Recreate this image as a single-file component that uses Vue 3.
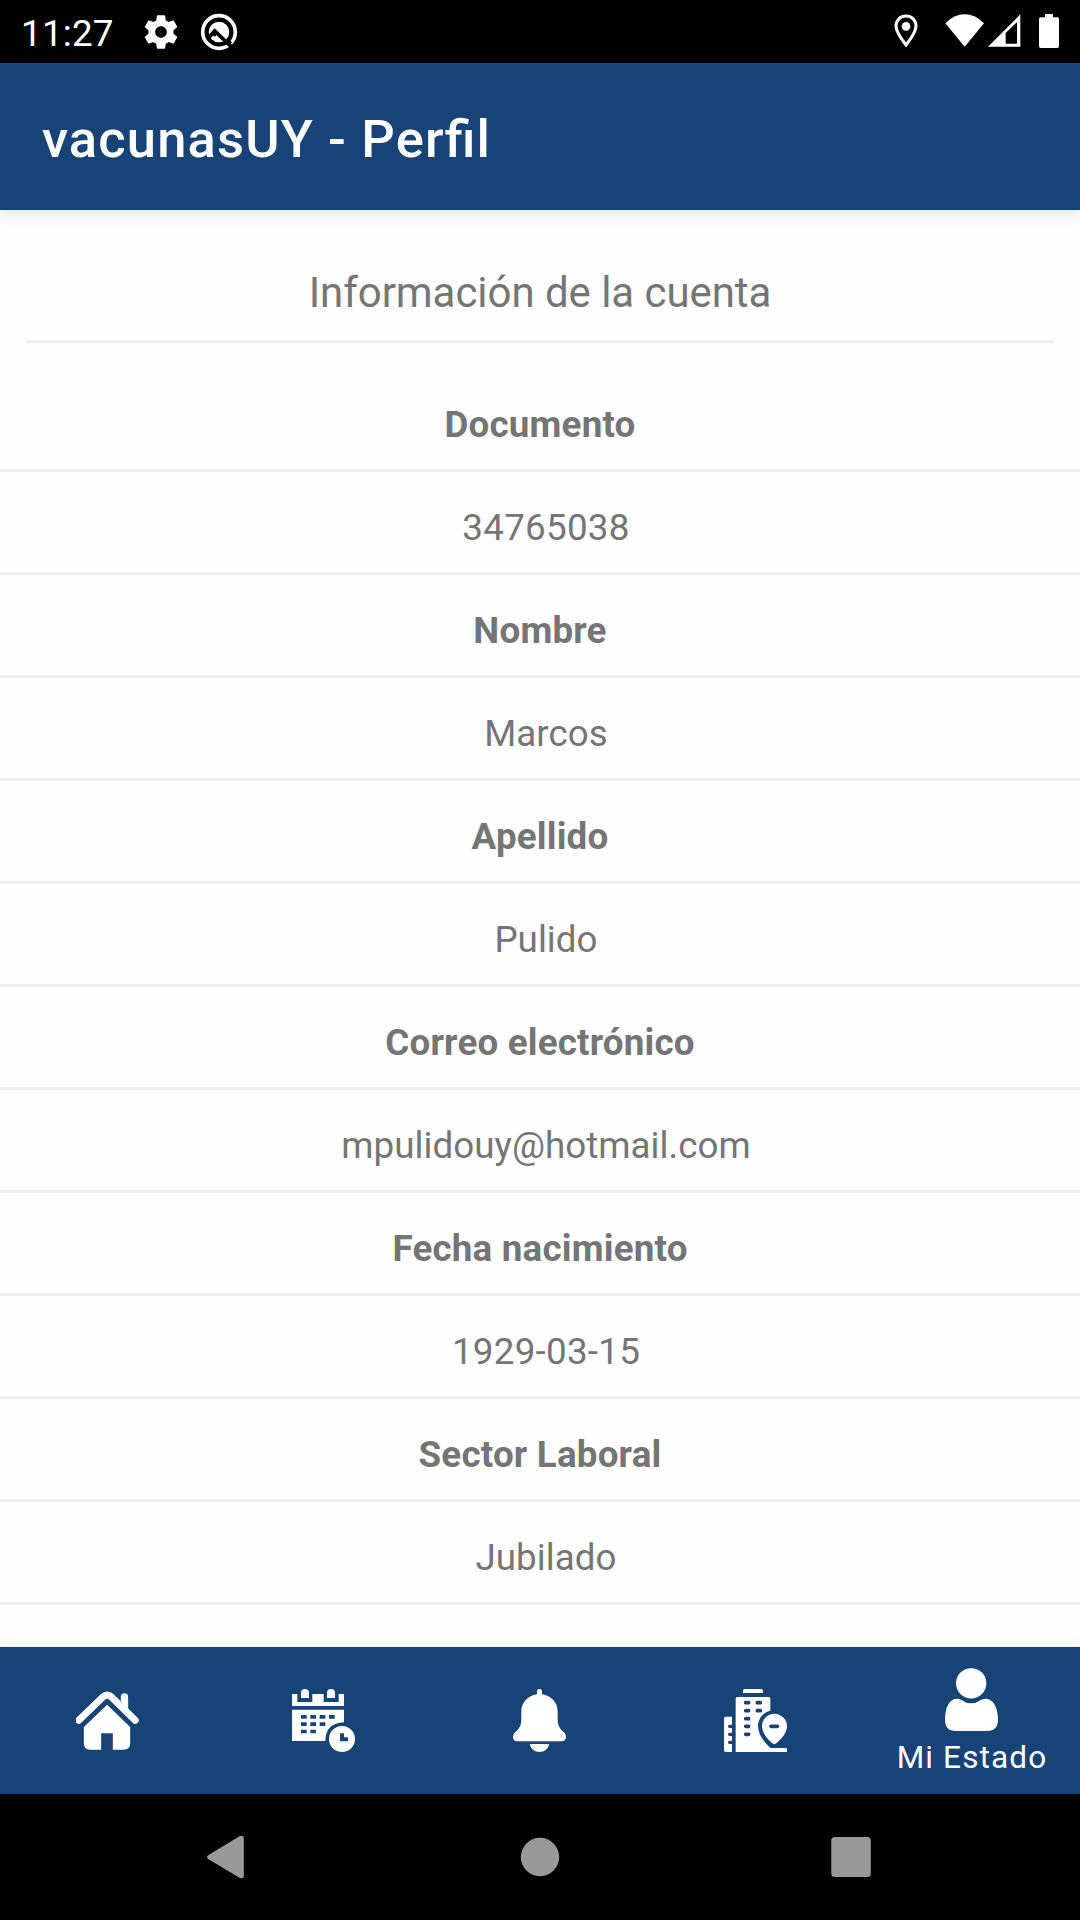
<script setup>
const fields = [
  { label: 'Documento', value: '34765038', numeric: true },
  { label: 'Nombre', value: 'Marcos' },
  { label: 'Apellido', value: 'Pulido' },
  { label: 'Correo electrónico', value: 'mpulidouy@hotmail.com' },
  { label: 'Fecha nacimiento', value: '1929-03-15', numeric: true },
  { label: 'Sector Laboral', value: 'Jubilado' }
]
</script>

<template>
  <div class="screen">
    <header class="status">
      <span class="clock">11:27</span>
      <svg class="gear" width="40" height="40" viewBox="0 0 24 24">
        <path d="M19.43 12.98c.04-.32.07-.64.07-.98s-.03-.66-.07-.98l2.11-1.65c.19-.15.24-.42.12-.64l-2-3.46c-.12-.22-.39-.3-.61-.22l-2.49 1c-.52-.4-1.08-.73-1.69-.98l-.38-2.65C14.46 2.18 14.25 2 14 2h-4c-.25 0-.46.18-.49.42l-.38 2.65c-.61.25-1.17.59-1.69.98l-2.49-1c-.23-.09-.49 0-.61.22l-2 3.46c-.13.22-.07.49.12.64l2.11 1.65c-.04.32-.07.65-.07.98s.03.66.07.98l-2.11 1.65c-.19.15-.24.42-.12.64l2 3.46c.12.22.39.3.61.22l2.49-1c.52.4 1.08.73 1.69.98l.38 2.65c.03.24.24.42.49.42h4c.25 0 .46-.18.49-.42l.38-2.65c.61-.25 1.17-.59 1.69-.98l2.49 1c.23.09.49 0 .61-.22l2-3.46c.12-.22.07-.49-.12-.64l-2.11-1.65zM12 15.5c-1.93 0-3.5-1.57-3.5-3.5s1.57-3.5 3.5-3.5 3.5 1.57 3.5 3.5-1.57 3.5-3.5 3.5z" fill="#fff" />
      </svg>
      <svg class="badge" width="38" height="38" viewBox="0 0 114 114">
        <circle cx="57" cy="57" r="49" fill="none" stroke="#fff" stroke-width="11" />
        <circle cx="57" cy="57" r="31" fill="#fff" />
        <path d="M27 73 44 54 99 106" fill="none" stroke="#000" stroke-width="11" />
        <path d="M44 54 44 70" stroke="#000" stroke-width="8" />
        <path d="M72 88 87 80 96 88 88 97Z" fill="#000" />
      </svg>
      <span class="spacer"></span>
      <svg class="pin" width="24" height="34" viewBox="0 0 72 102">
        <path d="M36 6C19 6 6 19 6 36 6 55 23 76 36 93 49 76 66 55 66 36 66 19 53 6 36 6Z" fill="none" stroke="#fff" stroke-width="9" />
        <circle cx="36" cy="37" r="13" fill="#fff" />
      </svg>
      <svg class="wifi" width="40" height="34" viewBox="0 0 120 102">
        <path d="M59 98 1 28Q27 1 59 1T117 28Z" fill="#fff" />
      </svg>
      <svg class="signal" width="33" height="34" viewBox="0 0 99 102">
        <path d="M0 98H97V1ZM53 89V57L87 24V89Z" fill="#fff" fill-rule="evenodd" />
      </svg>
      <svg class="battery" width="20" height="34" viewBox="0 0 60 102">
        <path d="M18 0H42V10H55Q60 10 60 15V97Q60 102 55 102H5Q0 102 0 97V15Q0 10 5 10H18Z" fill="#fff" />
      </svg>
    </header>

    <div class="appbar"><h1>vacunasUY - Perfil</h1></div>

    <main class="content">
      <h2>Información de la cuenta</h2>
      <dl>
        <template v-for="f in fields" :key="f.label">
          <dt>{{ f.label }}</dt>
          <dd :class="{ numeric: f.numeric }">{{ f.value }}</dd>
        </template>
      </dl>
    </main>

    <nav class="tabs">
      <div class="tab">
        <svg viewBox="79.5 147 189 189">
          <path d="M88 241 160 171Q173 160 186 171L257 241" fill="none" stroke="#fff" stroke-width="21" stroke-linecap="round" />
          <path d="M214 181V171Q214 160 225 160T236 171V218Z" fill="#fff" />
          <path d="M173 194 242 261V310Q242 329 223 329H190V280H155V329H122Q103 329 103 310V261Z" fill="#fff" />
        </svg>
      </div>
      <div class="tab">
        <svg viewBox="66 87 189 189">
          <path d="M66 102H82V126H127V102H161V126H206V102H222V138H66Z" fill="#fff" />
          <path d="M93 114V99Q93 87 105 87T117 99V114ZM171 114V99Q171 87 183 87T195 99V114Z" fill="#fff" />
          <path d="M66 149H222V187Q166 190 166 243H66Z" fill="#fff" />
          <path d="M93 165h17v11h-17zm28 0h17v11h-17zm28 0h17v11h-17zm28 0h17v11h-17zM93 187h17v11h-17zm28 0h17v11h-17zm28 0h17v11h-17zM93 209h17v11h-17zm28 0h17v11h-17z" fill="#184377" />
          <circle cx="216" cy="237" r="39" fill="#fff" />
          <path d="M210 220h12v12h12v12h-24z" fill="#184377" />
        </svg>
      </div>
      <div class="tab">
        <svg viewBox="54 87 189 189">
          <path d="M141 103V94Q141 87 148.500 87T156 94V103C184 107 203 128 203 155V179C203 199 213 209 221 216 233 227 229 244 215 244H82C68 244 64 227 76 216 84 209 94 199 94 179V155C94 128 113 107 141 103Z" fill="#fff" />
          <path d="M119 252H178C174 268 163 276 148.500 276S123 268 119 252Z" fill="#fff" />
        </svg>
      </div>
      <div class="tab">
        <svg viewBox="72 87 189 189">
          <path d="M129 99V92Q129 87 134 87H184Q189 87 189 92V99Z" fill="#fff" />
          <path d="M107 276V116Q107 111 112 111H206Q211 111 211 116V152C190 157 174 175 174 199 174 224 194 248 212 264H257Q262 264 262 270T257 276Z" fill="#fff" />
          <path d="M96 276H77Q72 276 72 271V176Q72 170 77 170H96V194H89Q84 194 84 199T89 204H96V218H89Q84 218 84 223T89 228H96V242H89Q84 242 84 247T89 252H96Z" fill="#fff" />
          <path d="M137 128h9m26 0h9M137 152h9m26 0h9M137 176h9M137 199h9M137 223h9" stroke="#184377" stroke-width="11" stroke-linecap="round" />
          <path d="M223 161C202 161 186 178 186 199 186 218 202 237 217 250Q223 255 229 250C244 237 261 218 261 199 261 178 244 161 223 161Z" fill="#fff" />
          <path d="M213 199h19" stroke="#184377" stroke-width="11" stroke-linecap="round" />
        </svg>
      </div>
      <div class="tab active">
        <svg viewBox="240 83 189 189">
          <circle cx="333.500" cy="129" r="45.500" fill="#fff" />
          <path d="M303 178Q333 200 364 178C390 167 414 190 414 239 414 261 402 272 382 272H287C267 272 255 261 255 239 255 190 277 167 303 178Z" fill="#fff" />
        </svg>
        <span>Mi Estado</span>
      </div>
    </nav>

    <footer class="system">
      <svg width="48" height="48" viewBox="0 0 48 48">
        <path d="M3.500 22 34.500 3.300Q38.800 1.500 38.800 5.500V42.500Q38.800 46.500 34.500 44.700L3.500 26.200Q.5 24 3.500 22Z" fill="#999" />
      </svg>
      <svg width="48" height="48" viewBox="0 0 48 48"><circle cx="24" cy="24" r="19.200" fill="#999" /></svg>
      <svg width="48" height="48" viewBox="0 0 48 48"><rect x="4.300" y="4" width="39.500" height="40" rx="3.500" fill="#999" /></svg>
    </footer>
  </div>
</template>

<style>
body {
  margin: 0;
}
</style>

<style scoped>
.screen {
  width: 1080px;
  height: 1920px;
  display: flex;
  flex-direction: column;
  overflow: hidden;
  background: #fefefe;
  color: #757575;
  font-family: Roboto, "Liberation Sans", sans-serif;
}
svg {
  display: block;
  flex: none;
}
.status {
  box-sizing: border-box;
  height: 63px;
  flex: none;
  display: flex;
  align-items: flex-start;
  padding: 14px 21px 0;
  background: #000;
}
.clock {
  width: 120px;
  margin-top: -1px;
  font-size: 36.75px;
  line-height: 41px;
  letter-spacing: 0.25px;
  color: #fff;
}
.gear {
  margin-top: -2.5px;
}
.badge {
  margin: -1.5px 0 0 19px;
}
.spacer {
  flex: 1;
}
.pin {
  margin-right: 27px;
}
.wifi {
  margin-right: 3px;
}
.signal {
  margin-right: 18px;
}
.appbar {
  box-sizing: border-box;
  position: relative;
  height: 147px;
  flex: none;
  display: flex;
  align-items: center;
  padding: 5px 42px 0;
  background: #184377;
  box-shadow: 0 4px 14px rgba(0, 0, 0, 0.1);
}
h1 {
  margin: 0;
  font-size: 52.5px;
  font-weight: 500;
  letter-spacing: 0.022em;
  font-feature-settings: "liga" 1;
  color: #fff;
}
.content {
  flex: 1;
  min-height: 0;
  overflow: hidden;
}
h2 {
  box-sizing: border-box;
  height: 133px;
  margin: 0 26px 26px;
  padding-top: 58px;
  border-bottom: 3px solid #eee;
  font-size: 42px;
  line-height: 50px;
  font-weight: 400;
  letter-spacing: -0.05px;
  text-align: center;
}
dl {
  margin: 0;
}
dt,
dd {
  box-sizing: border-box;
  height: 103px;
  margin: 0;
  padding-top: 11px;
  border-bottom: 3px solid #eee;
  font-size: 36.75px;
  line-height: 89px;
  text-align: center;
}
dt {
  font-weight: 700;
  letter-spacing: 0.2px;
}
dd {
  padding-left: 12px;
  letter-spacing: 0.04px;
}
dd.numeric {
  letter-spacing: 0.27px;
}
.tabs {
  position: relative;
  height: 147px;
  flex: none;
  display: flex;
  background: #184377;
  box-shadow: 0 0 12px rgba(0, 0, 0, 0.08);
}
.tab {
  flex: 1;
  display: flex;
  flex-direction: column;
  align-items: center;
  justify-content: center;
}
.tab svg {
  width: 63px;
  height: 63px;
  margin-right: 1px;
}
.tab.active {
  justify-content: flex-start;
  padding-top: 21px;
}
.tab span {
  margin-top: 7px;
  font-size: 31.5px;
  line-height: 40px;
  letter-spacing: 0.0365em;
  color: #fff;
}
.system {
  height: 126px;
  flex: none;
  display: flex;
  align-items: center;
  justify-content: center;
  gap: 263px;
  background: #000;
}
</style>
